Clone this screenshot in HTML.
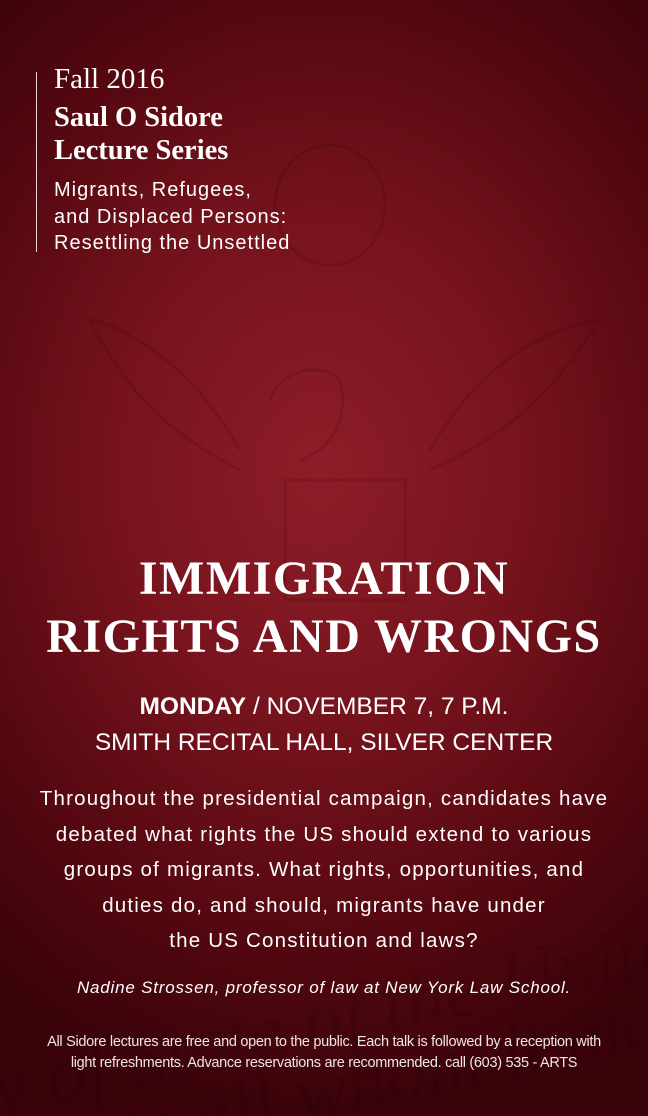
<!DOCTYPE html>
<html><head><meta charset="utf-8"><style>
html,body{margin:0;padding:0;width:648px;height:1116px;overflow:hidden}
body{position:relative;
background:radial-gradient(ellipse 520px 640px at 320px 470px,#8e1d28 0%,#76131d 40%,#560810 72%,#3a030a 100%);
font-family:"Liberation Sans",sans-serif;color:#fff}
.vl{position:absolute;left:36px;top:72px;width:1px;height:180px;background:#e8d8da}
.t{position:absolute;white-space:nowrap}
.serif{font-family:"Liberation Serif",serif}
.c{left:0;width:648px;text-align:center}
</style></head><body>
<svg width="648" height="1116" style="position:absolute;left:0;top:0;opacity:.12;overflow:hidden">
<g fill="none" stroke="#1a0004" stroke-width="3">
<ellipse cx="330" cy="205" rx="55" ry="60"/>
<path d="M240 450 C200 380 140 330 90 320 C120 380 160 430 240 470"/>
<path d="M430 450 C470 380 530 330 600 320 C560 380 520 430 430 470"/>
<path d="M270 400 C280 370 320 360 340 380 C350 420 330 450 300 460"/>
<rect x="285" y="480" width="120" height="120"/>
</g>
<g font-family="Liberation Serif" font-style="italic" fill="#1a0004" font-size="80">
<text x="-20" y="1050" transform="rotate(-12 300 1000)">y of State of the United</text>
<text x="-10" y="1120" transform="rotate(-12 300 1000)">uests all whom it may</text>
</g>
</svg>
<div class="vl"></div>
<div class="t serif" style="left:54px;top:63px;font-size:29px;">Fall 2016</div>
<div class="t serif" style="left:54px;top:101px;font-size:28.5px;font-weight:bold;line-height:33px">Saul O Sidore<br>Lecture Series</div>
<div class="t" style="left:54px;top:177px;font-size:20px;line-height:26.5px;letter-spacing:1px">Migrants, Refugees,<br>and Displaced Persons:<br>Resettling the Unsettled</div>
<div class="t serif c" style="top:550px;font-size:48px;font-weight:bold;line-height:58px;letter-spacing:1.5px">IMMIGRATION<br>RIGHTS AND WRONGS</div>
<div class="t c" style="top:689px;font-size:24.5px;line-height:36px"><b>MONDAY</b> / NOVEMBER 7, 7 P.M.<br>SMITH RECITAL HALL, SILVER CENTER</div>
<div class="t c" style="top:781px;font-size:20.5px;line-height:35.5px;letter-spacing:1.2px">Throughout the presidential campaign, candidates have<br>debated what rights the US should extend to various<br>groups of migrants. What rights, opportunities, and<br>duties do, and should, migrants have under<br>the US Constitution and laws?</div>
<div class="t c" style="top:978px;font-size:17px;font-style:italic;letter-spacing:.8px">Nadine Strossen, professor of law at New York Law School.</div>
<div class="t c" style="top:1032px;font-size:14.5px;line-height:21px;letter-spacing:-.3px;color:#f0e6e7">All Sidore lectures are free and open to the public. Each talk is followed by a reception with<br>light refreshments. Advance reservations are recommended. call (603) 535 - ARTS</div>
</body></html>
